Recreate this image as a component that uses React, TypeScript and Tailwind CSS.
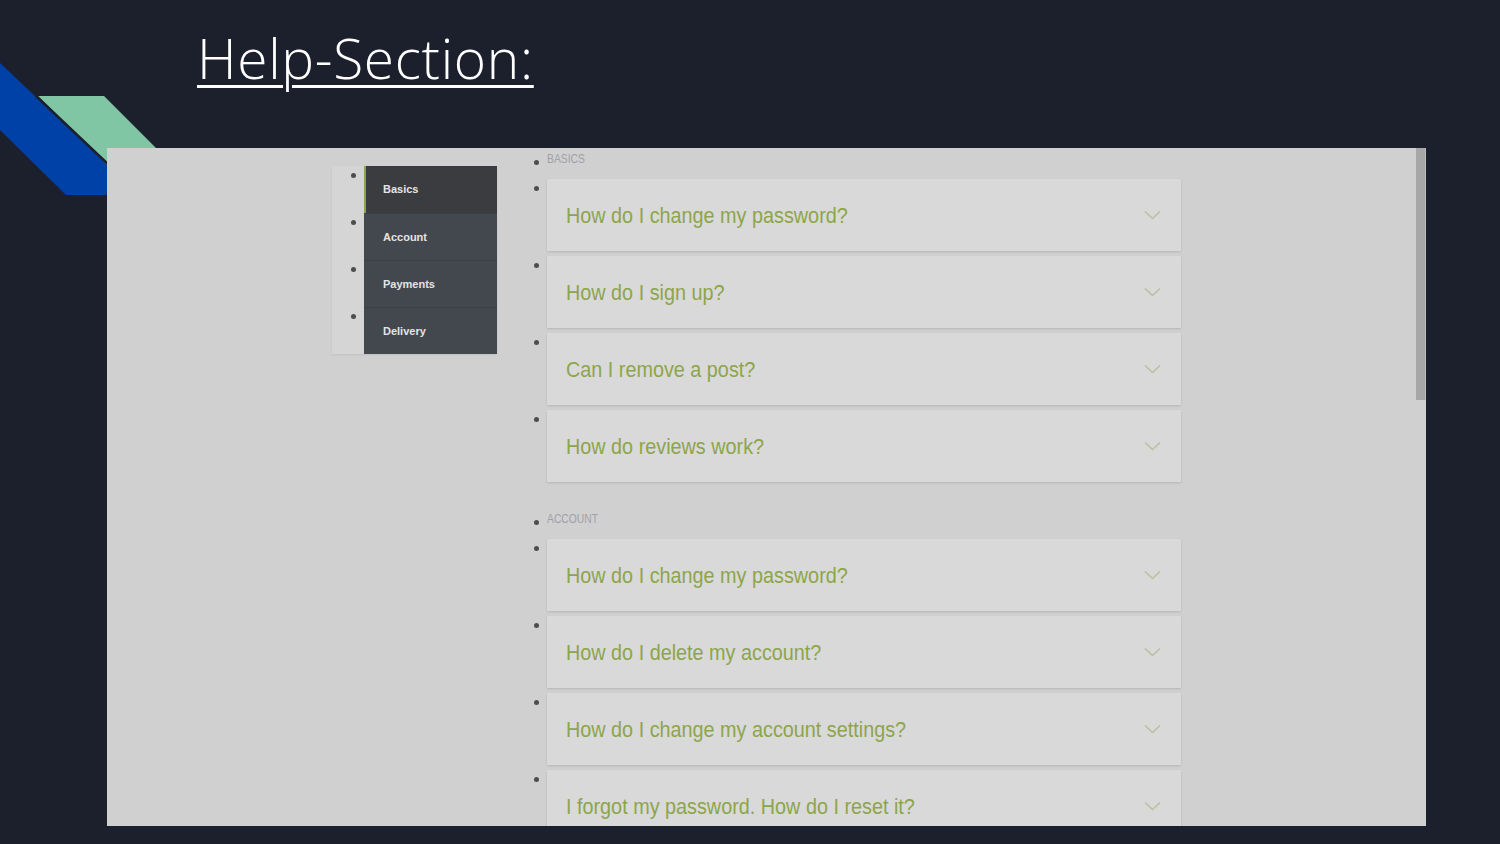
import React from 'react';

function Chevron() {
  return (
    <svg width="17" height="10" viewBox="0 0 17 10" fill="none">
      <path d="M1 1.5 L8.5 8.5 L16 1.5" stroke="#b8c09e" strokeWidth="1.6" />
    </svg>
  );
}

function Dot({ top }: { top: string }) {
  return <span className={`block w-[5px] h-[5px] rounded-full bg-[#4d4d4d] shrink-0 ${top}`} />;
}

function Section({ title, questions, first }: { title: string; questions: string[]; first?: boolean }) {
  return (
    <>
      <li className={`flex items-start gap-[8px] h-[16px] mb-[10px] ${first ? '' : 'mt-[31px]'}`}>
        <Dot top="mt-[7px]" />
        <span className="inline-block origin-left scale-x-[0.86] text-[12px] leading-[12px] text-[#a0a0a8] uppercase">
          {title}
        </span>
      </li>
      {questions.map((q) => (
        <li key={q} className="flex items-start gap-[8px] mb-[5px]">
          <Dot top="mt-[7px]" />
          <div className="w-[634px] h-[72px] bg-[#d9d9d9] shadow-[0_1px_2px_rgba(0,0,0,0.12)] flex items-center justify-between pl-[19px] pr-[20px]">
            <span className="inline-block origin-left scale-x-[0.9] text-[22px] text-[#8da54a] whitespace-nowrap">{q}</span>
            <Chevron />
          </div>
        </li>
      ))}
    </>
  );
}

export default function App() {
  const menu = ['Basics', 'Account', 'Payments', 'Delivery'];

  return (
    <div className="relative w-[1500px] h-[844px] overflow-hidden bg-[#1b202c]" style={{ fontFamily: '"Liberation Sans", Arial, sans-serif' }}>
      {/* decorative stripes */}
      <svg className="absolute left-0 top-0" width="170" height="200" viewBox="0 0 170 200">
        <polygon points="0,63 140,195 66,195 0,130" fill="#0041a8" />
        <polygon points="38,96 104,96 156,148 110,168" fill="#80c6a5" />
        <line x1="36" y1="96" x2="112" y2="168" stroke="#1b202c" strokeWidth="2.5" />
      </svg>

      <div className="h-[148px] pl-[197px] pt-[22px]">
        <h1 className="text-[55px] leading-[72px] font-light tracking-[0.7px] text-white underline decoration-[3px] underline-offset-[6px]" style={{ fontFamily: '"Open Sans", sans-serif' }}>
          Help-Section:
        </h1>
      </div>

      <div className="relative ml-[107px] w-[1319px] h-[678px] bg-[#d0d0d0] flex overflow-hidden">
        <div className="flex-1 flex items-start pl-[225px]">
          <ul className="mt-[18px] w-[165px] bg-[#d5d5d5] shadow-[0_1px_2px_rgba(0,0,0,0.08)] pl-[19px]">
            {menu.map((m, i) => (
              <li key={m} className="flex items-start gap-[8px]">
                <Dot top="mt-[7px]" />
                <div
                  className={`w-[133px] h-[47px] flex items-center text-[11px] font-bold text-[#e4e4e4] ${
                    i === 0 ? 'bg-[#3b3c40] border-l-2 border-[#8da54a] pl-[17px]' : 'bg-[#43474e] border-t border-[#3c3f45] pl-[19px]'
                  }`}
                >
                  {m}
                </div>
              </li>
            ))}
          </ul>

          <ul className="ml-[37px] pt-[5px]">
            <Section
              first
              title="Basics"
              questions={['How do I change my password?', 'How do I sign up?', 'Can I remove a post?', 'How do reviews work?']}
            />
            <Section
              title="Account"
              questions={[
                'How do I change my password?',
                'How do I delete my account?',
                'How do I change my account settings?',
                'I forgot my password. How do I reset it?',
              ]}
            />
          </ul>
        </div>

        <div className="w-[10px] bg-[#d0d0d0] flex flex-col">
          <div className="h-[252px] bg-[#a7a7a7] border-r border-[#bdbdbd]" />
        </div>
      </div>
    </div>
  );
}
